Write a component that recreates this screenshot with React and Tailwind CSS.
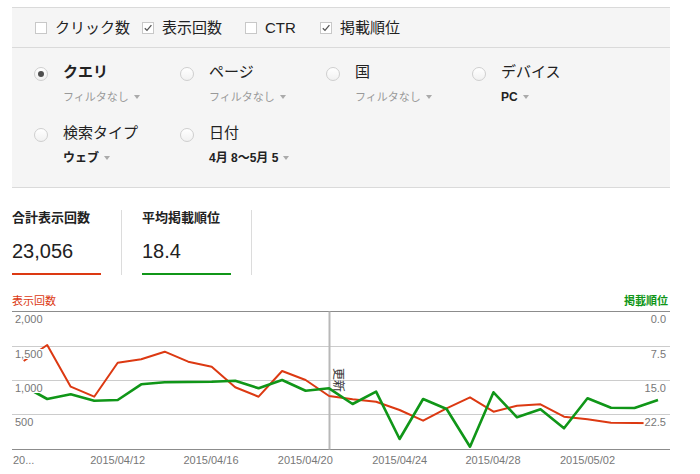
import React from 'react'

const FONT = "'Liberation Sans', 'Noto Sans CJK JP', sans-serif"

// page coordinates, read off the screenshot
const red = [361, 345, 386.7, 396.7, 362.7, 359.3, 351.7, 361.7, 366.7, 387.3, 396.7, 371, 380, 396, 399.3, 401.7, 410, 420.7, 408.3, 397.3, 411.7, 405.7, 404.3, 416.7, 419.3, 422.7, 423, 423.3]
const green = [386, 399, 394.3, 400.7, 400, 384.3, 382.3, 382, 381.7, 380.7, 388.3, 380, 390.7, 388.3, 404, 391.7, 439, 399, 409, 446.7, 392.3, 417.3, 409.3, 428.3, 398.3, 407.7, 408, 400]
const xAt = (i) => 23.74 + 23.49 * i
const toPoints = (arr) => arr.map((y, i) => `${xAt(i).toFixed(1)},${y}`).join(' ')

const gridY = [311.5, 346.5, 380.5, 414.5, 449.5]
const leftLabels = ['2,000', '1,500', '1,000', '500']
const rightLabels = ['0.0', '7.5', '15.0', '22.5']
const xLabels = [
  { t: '2015/04/12', x: 117.7 },
  { t: '2015/04/16', x: 211 },
  { t: '2015/04/20', x: 305.3 },
  { t: '2015/04/24', x: 399.7 },
  { t: '2015/04/28', x: 493 },
  { t: '2015/05/02', x: 587.5 },
]

const textWidth = (s) => s.split('').reduce((w, c) => w + (c === ',' || c === '.' ? 3.06 : 6.12), 0)

const Checkbox = ({ checked, label, className }) => (
  <div className={`flex items-center gap-[8px] ${className}`}>
    <div className="w-[12px] h-[12px] border border-[#c8c8c8] bg-white flex items-center justify-center">
      {checked && (
        <svg width="10" height="10" viewBox="0 0 10 10">
          <path d="M1.8 5.2 L4 7.4 L8.4 2.2" fill="none" stroke="#555" strokeWidth="1.3" />
        </svg>
      )}
    </div>
    <span className="text-[15px] leading-[20px] text-[#222]">{label}</span>
  </div>
)

const Caret = () => (
  <span className="inline-block ml-[5px] w-0 h-0 border-x-[3.5px] border-x-transparent border-t-[4px] border-t-[#aaa] align-middle" />
)

const Radio = ({ selected, label, sub, subBold }) => (
  <div className="flex gap-[15px]">
    <div className="mt-[5px] w-[14px] h-[14px] rounded-full border border-[#cfcfcf] bg-gradient-to-b from-white to-[#f1f1f1] flex items-center justify-center">
      {selected && <div className="w-[6px] h-[6px] rounded-full bg-[#4f4f4f]" />}
    </div>
    <div>
      <div className={`text-[15px] leading-[20px] text-[#222] ${selected ? 'font-bold' : ''}`}>{label}</div>
      <div className={`mt-[7px] leading-[16px] flex items-center ${subBold ? 'text-[12px] font-bold text-[#222]' : 'text-[11px] text-[#999]'}`}>
        {sub}
        <Caret />
      </div>
    </div>
  </div>
)

const Chart = () => (
  <svg width="658" height="166" viewBox="12 308 658 166" className="block">
    {gridY.map((y, i) => (
      <line key={y} x1="12" x2="670" y1={y} y2={y} stroke={i === 0 || i === 4 ? '#8c8c8c' : '#cccccc'} strokeWidth="1" />
    ))}
    <line x1="329.5" x2="329.5" y1="311.5" y2="449.5" stroke="#b8b8b8" strokeWidth="2" />
    <polyline points={toPoints(red)} fill="none" stroke="#dc3912" strokeWidth="2" strokeLinejoin="round" />
    <polyline points={toPoints(green)} fill="none" stroke="#109618" strokeWidth="2.6" strokeLinejoin="round" />

    {leftLabels.map((t, i) => (
      <g key={t}>
        <rect x="14" y={gridY[i] + 2.5} width={textWidth(t) + 2} height="10" fill="#fff" />
        <text x="15" y={gridY[i] + 11} fontSize="11" fill="#777" fontFamily={FONT}>{t}</text>
      </g>
    ))}
    {rightLabels.map((t, i) => (
      <g key={t}>
        <rect x={666 - textWidth(t) - 1} y={gridY[i] + 2.5} width={textWidth(t) + 2} height="10" fill="#fff" />
        <text x="666" y={gridY[i] + 11} fontSize="11" fill="#777" textAnchor="end" fontFamily={FONT}>{t}</text>
      </g>
    ))}

    <text transform="translate(333.5 368) rotate(90)" fontSize="12" fill="#333" fontFamily={FONT}>更新</text>

    <text x="13" y="463.5" fontSize="11" fill="#777" fontFamily={FONT}>20...</text>
    {xLabels.map((l) => (
      <text key={l.t} x={l.x} y="463.5" fontSize="11" fill="#777" textAnchor="middle" fontFamily={FONT}>{l.t}</text>
    ))}
  </svg>
)

export default function App() {
  return (
    <div className="w-[700px] h-[474px] bg-white overflow-hidden font-['Liberation_Sans','Noto_Sans_CJK_JP',sans-serif]">
      <div className="ml-[12px] w-[658px]">
        {/* filter panel */}
        <div className="mt-[7px] bg-[#f5f5f5] border-t border-b border-[#dadada]">
          <div className="h-[40px] flex items-center pl-[23px] border-b border-[#dadada]">
            <Checkbox label="クリック数" className="w-[107px]" />
            <Checkbox checked label="表示回数" className="w-[103px]" />
            <Checkbox label="CTR" className="w-[75px]" />
            <Checkbox checked label="掲載順位" />
          </div>
          <div className="pl-[22px] pt-[14px] pb-[21px] grid grid-cols-[146px_146px_146px_146px] gap-y-[18px]">
            <Radio selected label="クエリ" sub="フィルタなし" />
            <Radio label="ページ" sub="フィルタなし" />
            <Radio label="国" sub="フィルタなし" />
            <Radio label="デバイス" sub="PC" subBold />
            <Radio label="検索タイプ" sub="ウェブ" subBold />
            <Radio label="日付" sub="4月 8〜5月 5" subBold />
          </div>
        </div>

        {/* totals */}
        <div className="mt-[22px] flex">
          <div className="pr-[20px] border-r border-[#dcdcdc]">
            <div className="w-[89px] text-[13px] leading-[16px] font-bold text-[#222]">合計表示回数</div>
            <div className="mt-[13px] text-[20px] leading-[24px] text-[#222]">23,056</div>
            <div className="mt-[10px] h-[2px] bg-[#dc3912]" />
          </div>
          <div className="pl-[20px] pr-[20px] border-r border-[#dcdcdc]">
            <div className="w-[89px] text-[13px] leading-[16px] font-bold text-[#222]">平均掲載順位</div>
            <div className="mt-[13px] text-[20px] leading-[24px] text-[#222]">18.4</div>
            <div className="mt-[10px] h-[2px] bg-[#109618]" />
          </div>
        </div>

        {/* chart */}
        <div className="mt-[19px] flex justify-between text-[11px] leading-[14px]">
          <span className="text-[#dc3912]">表示回数</span>
          <span className="text-[#109618] font-semibold mr-[2px]">掲載順位</span>
        </div>
        <Chart />
      </div>
    </div>
  )
}
